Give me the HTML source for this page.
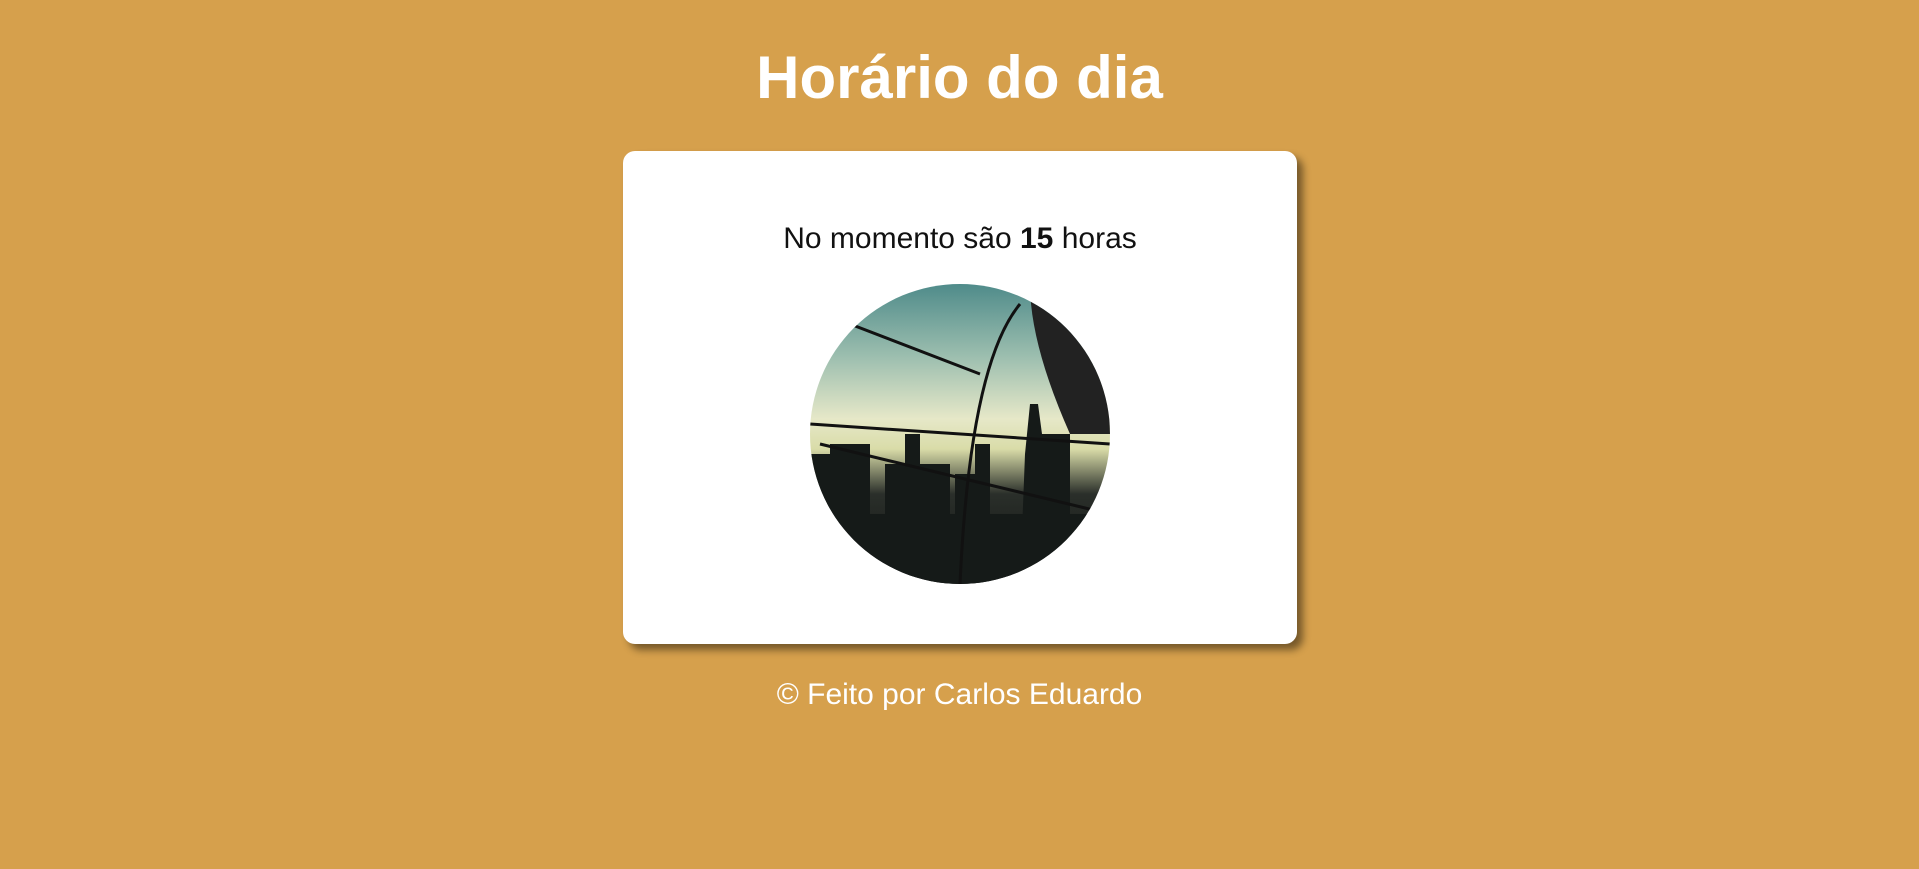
<!DOCTYPE html>
<html><head><meta charset="utf-8"><style>
html,body{margin:0;padding:0}
body{width:1919px;height:869px;background:#D6A04C;font-family:"Liberation Sans",sans-serif;position:relative;overflow:hidden}
h1{position:absolute;top:43px;left:0;width:1919px;text-align:center;margin:0;color:#fff;font-size:60px;font-weight:bold}
.card{position:absolute;left:623px;top:151px;width:674px;height:493px;background:#fff;border-radius:12px;box-shadow:6px 6px 8px rgba(0,0,0,.45)}
.card p{position:absolute;top:71px;left:0;width:100%;text-align:center;margin:0;font-size:30px;color:#111}
.img{position:absolute;left:187px;top:133px;width:300px;height:300px;border-radius:50%;overflow:hidden;background:linear-gradient(180deg,#4f8b8a 0%,#9fc0b0 25%,#e6e8c8 45%,#d9dca8 55%,#2a2f2a 70%,#111 100%)}
footer{position:absolute;top:678px;left:0;width:1919px;text-align:center;color:#fff;font-size:30px}
</style></head><body>
<h1>Horário do dia</h1>
<div class="card"><p>No momento são <b>15</b> horas</p>
<div class="img"><svg width="300" height="300" viewBox="0 0 300 300">
<path d="M0 170 L20 170 L20 160 L60 160 L60 300 L0 300Z M75 180 L95 180 L95 150 L110 150 L110 180 L140 180 L140 300 L75 300Z M145 190 L165 190 L165 160 L180 160 L180 300 L145 300Z M215 170 L220 120 L228 120 L232 150 L260 150 L260 300 L210 300Z M110 230 L300 230 L300 300 L0 300 L0 230Z" fill="#151a18"/>
<path d="M0 140 L300 160 M40 40 L170 90 M10 160 L300 230 M210 20 Q160 80 150 300" stroke="#111" stroke-width="3" fill="none"/>
<path d="M220 0 Q300 20 300 150 L260 150 Q220 60 220 0Z" fill="#222"/>
</svg></div></div>
<footer>© Feito por Carlos Eduardo</footer>
</body></html>
